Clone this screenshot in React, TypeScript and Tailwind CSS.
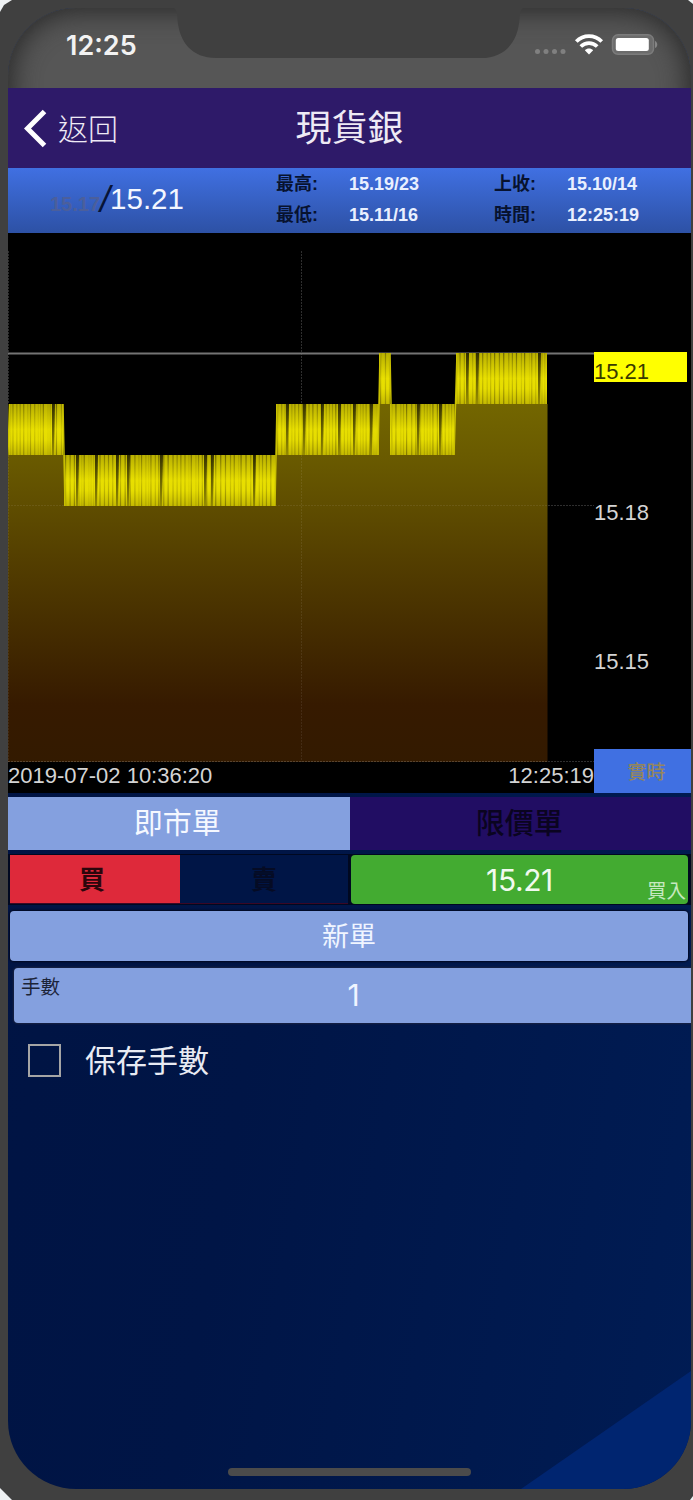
import React, { useState } from 'react';

// each band is one price level the tick line bounces in
const BANDS = [
  { x1: 1, x2: 55, top: 171, gaps: [45] },
  { x1: 56, x2: 267, top: 222, gaps: [69, 88, 109, 120, 153, 197, 204, 246] },
  { x1: 268, x2: 371, top: 171, gaps: [279, 296, 314, 331, 346, 363] },
  { x1: 371, x2: 382, top: 120, gaps: [] },
  { x1: 382, x2: 447, top: 171, gaps: [410, 432] },
  { x1: 448, x2: 539, top: 120, gaps: [459, 469, 531] },
];
const BAND_HEIGHT = 51;

function stripes(x1: number, x2: number) {
  const list: { x: number; o: number }[] = [];
  let x = x1 + 1;
  let i = x1;
  while (x < x2 - 1) {
    i += 1;
    const r = Math.abs(Math.sin(i * 12.9898) * 43758.5453) % 1;
    list.push({ x, o: 0.15 + r * 0.6 });
    x += 2.2 + r * 3;
  }
  return list;
}

function PriceChart() {
  return (
    <svg width="586" height="529" viewBox="0 0 586 529" className="block">
      <defs>
        <linearGradient id="area" gradientUnits="userSpaceOnUse" x1="0" y1="120" x2="0" y2="529">
          <stop offset="0" stopColor="#7c7100" />
          <stop offset="0.25" stopColor="#6a5b00" />
          <stop offset="0.5" stopColor="#543f00" />
          <stop offset="0.86" stopColor="#361a00" />
          <stop offset="1" stopColor="#331a00" />
        </linearGradient>
        <linearGradient id="band" x1="0" y1="0" x2="0" y2="1">
          <stop offset="0" stopColor="#b9b000" />
          <stop offset="0.5" stopColor="#e8df00" />
          <stop offset="0.7" stopColor="#e6dd00" />
          <stop offset="1" stopColor="#c4b900" />
        </linearGradient>
        <linearGradient id="gap" x1="0" y1="0" x2="0" y2="1">
          <stop offset="0" stopColor="#1c1a00" />
          <stop offset="1" stopColor="#8f8500" />
        </linearGradient>
        <linearGradient id="stripe" x1="0" y1="0" x2="0" y2="1">
          <stop offset="0" stopColor="#4a4500" />
          <stop offset="0.5" stopColor="#b8af00" />
          <stop offset="1" stopColor="#6a6000" />
        </linearGradient>
      </defs>
      <path
        d="M0 222H56V273H267V222H371V171H382V222H447V171H539.500V529H0Z"
        fill="url(#area)"
      />
      <g stroke="#fff" strokeDasharray="2 1">
        <path d="M293.5 18V171M0.5 18V171M540 272.5H586M0 528.5H586" strokeOpacity="0.18" />
        <path d="M293.5 222V529M0.5 222V529M0 272.5H540" strokeOpacity="0.08" />
      </g>
      <path d="M0 120.5H586" stroke="#747474" strokeWidth="2" />
      {BANDS.map((b) => (
        <g key={b.x1}>
          <rect x={b.x1} y={b.top} width={b.x2 - b.x1} height={BAND_HEIGHT} fill="url(#band)" />
          {stripes(b.x1, b.x2).map((s) => (
            <rect key={s.x} x={s.x} y={b.top} width="1.2" height={BAND_HEIGHT} fill="url(#stripe)" opacity={s.o} />
          ))}
          {b.gaps.map((g) => (
            <path
              key={g}
              d={`M${g - 1} ${b.top}h3l-1 ${BAND_HEIGHT}h-2z`}
              fill="url(#gap)"
              opacity="0.85"
            />
          ))}
        </g>
      ))}
      <path d="M0 222L1.5 171M55 171L57 273M267 273L269 171M370 222L372 120M382 120L384 222M446 222L449 120" stroke="#c9c000" strokeWidth="1.5" fill="none" />
    </svg>
  );
}

function StatusIcons() {
  return (
    <svg width="126" height="28" viewBox="0 0 126 28" className="block">
      <g fill="#808080">
        <circle cx="4.5" cy="21.5" r="2.5" />
        <circle cx="13" cy="21.5" r="2.5" />
        <circle cx="21.5" cy="21.5" r="2.5" />
        <circle cx="30" cy="21.5" r="2.5" />
      </g>
      <g fill="none" stroke="#fff" strokeWidth="3.8">
        <path d="M43.3 11.5C50.5 4.400 61.5 4.400 68.700 11.5" />
        <path d="M47.800 16.5C52.5 12 59.5 12 64.200 16.5" />
      </g>
      <path d="M51.800 20.300C54.300 18 57.700 18 60.200 20.300L56 24.500Z" fill="#fff" />
      <rect x="79.5" y="4.800" width="41" height="19.5" rx="5.5" fill="#6c6c6c" stroke="#7c7c7c" strokeWidth="1.5" />
      <rect x="82.800" y="8" width="33" height="13" rx="2.5" fill="#fff" />
      <path d="M122 11c3 1 3 6 0 7z" fill="#858585" />
    </svg>
  );
}

export default function App() {
  const [side, setSide] = useState<'buy' | 'sell'>('buy');
  const [saved, setSaved] = useState(false);

  return (
    <div className="h-[1500px] w-[693px] overflow-hidden bg-[#eef1f3] font-['Liberation_Sans','Noto_Sans_CJK_TC',sans-serif]">
      <div className="h-full bg-[#404040] pt-2 pr-[2px] pb-[11px] pl-2 [clip-path:polygon(0_12px,4px_5px,12px_0,688px_0,693px_4px,693px_1496px,690px_1500px,12px_1500px,0_1488px)]">
        <div className="relative flex h-full flex-col overflow-hidden rounded-[68px] bg-[linear-gradient(100deg,#001342_0%,#001546_45%,#001c54_100%)]">
          <svg width="170" height="118" viewBox="0 0 170 118" className="absolute right-0 bottom-0">
            <path d="M0 118L170 0V118Z" fill="#002570" />
          </svg>

          {/* status bar */}
          <div className="relative h-20 shrink-0 overflow-hidden bg-[#565656]">
            <div className="absolute inset-x-0 top-0 h-[160px] rounded-[68px] shadow-[inset_0_0_26px_5px_#2c2c2c]" />
            <div className="absolute top-0 left-[166px] h-[50px] w-[349px]">
              <svg width="349" height="50" viewBox="0 0 349 50" className="block">
                <path d="M0 0Q3 2 3.5 11C5 34 18 50 42 50H307C331 50 344 34 345.5 11Q346 2 349 0Z" fill="#404040" />
              </svg>
            </div>
            <div className="relative flex items-start justify-between pt-[22px] pr-[32px] pl-[58px]">
              <span className="pt-px font-['Inter',sans-serif] text-[27px] leading-[30px] font-semibold text-[#f2f2f2]">12:25</span>
              <StatusIcons />
            </div>
          </div>

          {/* nav */}
          <div className="grid h-20 shrink-0 grid-cols-[1fr_auto_1fr] items-center bg-[#2e1a69] text-[#eeeaf5]">
            <button className="flex items-center pl-[16px]">
              <svg width="24" height="40" viewBox="0 0 24 40" className="block">
                <path d="M20.5 3.5L3.5 20.500L20.5 37.500" fill="none" stroke="#fff" strokeWidth="5" />
              </svg>
              <span className="pt-[3px] pl-[10px] text-[30px] leading-10 font-light">返回</span>
            </button>
            <h1 className="pt-px text-[36px] leading-[44px]">現貨銀</h1>
            <span />
          </div>

          {/* quote */}
          <div className="flex h-[65px] shrink-0 bg-linear-to-b from-[#4070e2] to-[#2d51a5]">
            <div className="flex w-[268px] items-baseline pt-[9px] pl-[42px]">
              <span className="relative top-[2px] text-[20px] font-bold text-[#4b5f9c]">15.17</span>
              <span className="relative top-[3px] text-[36px] leading-[40px] text-[#071437] italic">/</span>
              <span className="text-[29.5px] leading-[40px] text-[#f4f7ff]">15.21</span>
            </div>
            <div className="grid grid-cols-[73px_145px_73px_100px] grid-rows-[31px_31px] items-center text-[18px] leading-none font-bold whitespace-nowrap text-[#e9f0ff]">
              <span className="text-[#07122f]">最高:</span>
              <span>15.19/23</span>
              <span className="text-[#07122f]">上收:</span>
              <span>15.10/14</span>
              <span className="text-[#07122f]">最低:</span>
              <span>15.11/16</span>
              <span className="text-[#07122f]">時間:</span>
              <span>12:25:19</span>
            </div>
          </div>

          {/* chart */}
          <div className="flex h-[560px] shrink-0 bg-black text-[22px] leading-[26px] text-[#d4d4d4]">
            <div className="w-[586px]">
              <PriceChart />
              <div className="flex justify-between pt-px">
                <span>2019-07-02 10:36:20</span>
                <span>12:25:19</span>
              </div>
            </div>
            <div className="flex flex-1 flex-col">
              <div className="mt-[119px] mr-[4px] h-[30px] bg-[#ffff00] pt-[7px] text-[#3a3a00]">15.21</div>
              <div className="mt-[118px]">15.18</div>
              <div className="mt-[123px]">15.15</div>
              <button className="mt-auto h-[44px] bg-[#4070e2] pt-[3px] pl-[8px] text-[19px] font-medium text-[#94865c]">實時</button>
            </div>
          </div>

          {/* order type */}
          <div className="mt-[4px] grid h-[53px] shrink-0 grid-cols-2 text-[29px]">
            <button className="bg-[#84a0df] pt-[3px] pr-[3px] text-[#f5f8ff]">即市單</button>
            <button className="bg-[#210d63] pt-[3px] pr-[2px] font-medium text-[#0a0420]">限價單</button>
          </div>

          <div className="mt-1 flex h-[51px] shrink-0 bg-[#000820] py-px pr-[3px] pl-[2px]">
            <div className="grid w-[338px] grid-cols-[170px_168px] border-b border-[#3a0826] text-[26px] font-bold">
              <button
                onClick={() => setSide('buy')}
                className={side === 'buy' ? 'bg-[#de293a] pt-[3px] pr-[6px] text-[#2b060c]' : 'bg-[#001546] pt-[3px] pr-[6px] text-[#050b24]'}
              >
                買
              </button>
              <button
                onClick={() => setSide('sell')}
                className={side === 'sell' ? 'bg-[#de293a] pt-[3px] text-[#2b060c]' : 'bg-[#001546] pt-[3px] text-[#050b24]'}
              >
                賣
              </button>
            </div>
            <button className="relative ml-[3px] flex-1 rounded-[4px] bg-[#43ab31] font-['Inter',sans-serif] text-[30px] leading-none tracking-[-0.4px] text-[#f1faef]">
              15.21
              <span className="absolute right-[2px] bottom-[4px] font-['Noto_Sans_CJK_TC',sans-serif] text-[19.5px] leading-[20px] tracking-normal text-[#c6e8bf]">買入</span>
            </button>
          </div>

          <button className="mt-[6px] mr-[3px] ml-[2px] h-[50px] shrink-0 rounded-[4px] bg-[#84a0df] pt-[3px] text-[27px] text-[#f0f5ff] shadow-[0_0_2px_1px_#000820]">
            新單
          </button>

          <div className="mt-[7px] ml-[6px] flex h-[55px] shrink-0 rounded-l-[4px] bg-[#84a0df] shadow-[0_0_2px_1px_#1a2340]">
            <span className="w-[120px] pt-[6px] pl-[7px] text-[19.5px] leading-[26px] text-[#1c2438]">手數</span>
            <span className="flex-1 pr-[118px] text-center font-['Inter',sans-serif] text-[30px] leading-[54px] text-[#f0f5ff]">1</span>
          </div>

          <label className="mt-[17px] flex items-center pl-[20px] text-[31px] leading-[40px] text-[#e8ebf3]">
            <input type="checkbox" checked={saved} onChange={() => setSaved(!saved)} className="peer sr-only" />
            <span className="block size-[33px] border-2 border-[#a5a5a5] peer-checked:bg-[#4070e2]" />
            <span className="relative top-[2px] pl-[24px]">保存手數</span>
          </label>

          {/* home indicator */}
          <div className="mx-auto mt-auto mb-[13px] h-[8px] w-[243px] shrink-0 rounded-full bg-[#4b4b4b]" />
        </div>
      </div>
    </div>
  );
}
